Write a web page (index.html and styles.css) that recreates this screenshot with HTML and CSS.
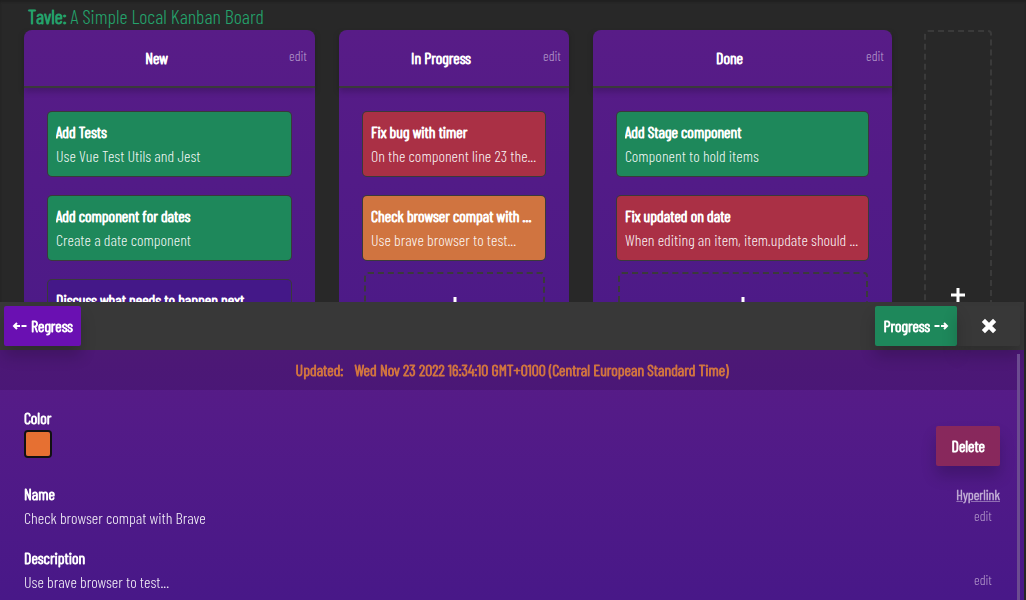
FILE: index.html
```html
<!DOCTYPE html>
<html lang="en">
<head>
<meta charset="utf-8">
<title>Tavle</title>
<link rel="stylesheet" href="styles.css">
</head>
<body>
<main class="board">
  <h1 class="brand"><strong>Tavle:</strong> A Simple Local Kanban Board</h1>
  <div class="stages">
    <section class="stage">
      <header class="stage-head"><h2 class="stage-name">New</h2><button class="edit">edit</button></header>
      <div class="stage-items">
        <article class="card green"><h3 class="card-name">Add Tests</h3><p class="card-text">Use Vue Test Utils and Jest</p></article>
        <article class="card green"><h3 class="card-name">Add component for dates</h3><p class="card-text">Create a date component</p></article>
        <article class="card indigo"><h3 class="card-name">Discuss what needs to happen next</h3></article>
      </div>
    </section>
    <section class="stage">
      <header class="stage-head"><h2 class="stage-name">In Progress</h2><button class="edit">edit</button></header>
      <div class="stage-items">
        <article class="card red"><h3 class="card-name">Fix bug with timer</h3><p class="card-text">On the component line 23 the...</p></article>
        <article class="card orange"><h3 class="card-name">Check browser compat with ...</h3><p class="card-text">Use brave browser to test...</p></article>
        <button class="add-item" aria-label="Add item"><svg class="plus" viewBox="0 0 16 16"><path d="M8 1v14M1 8h14"/></svg></button>
      </div>
    </section>
    <section class="stage">
      <header class="stage-head"><h2 class="stage-name">Done</h2><button class="edit">edit</button></header>
      <div class="stage-items">
        <article class="card green"><h3 class="card-name">Add Stage component</h3><p class="card-text">Component to hold items</p></article>
        <article class="card red"><h3 class="card-name">Fix updated on date</h3><p class="card-text">When editing an item, item.update should ...</p></article>
        <button class="add-item" aria-label="Add item"><svg class="plus" viewBox="0 0 16 16"><path d="M8 1v14M1 8h14"/></svg></button>
      </div>
    </section>
    <button class="add-stage" aria-label="Add stage"><svg class="plus" viewBox="0 0 16 16"><path d="M8 1v14M1 8h14"/></svg></button>
  </div>
</main>
<aside class="drawer">
  <div class="toolbar">
    <button class="btn regress"><svg class="arrow" viewBox="0 0 15 10"><path d="M5 2L2 5L5 8M2 5H8M9.500 5H14.500"/></svg>Regress</button>
    <button class="btn progress">Progress<svg class="arrow" viewBox="0 0 15 10"><path d="M10 2L13 5L10 8M13 5H7M5.500 5H.5"/></svg></button>
    <button class="btn close" aria-label="Close"><svg class="cross" viewBox="0 0 16 16"><path d="M3 3L13 13M13 3L3 13"/></svg></button>
  </div>
  <div class="details">
    <p class="updated"><span>Updated:</span><time>Wed Nov 23 2022 16:34:10 GMT+0100 (Central European Standard Time)</time></p>
    <div class="fields">
      <div class="row">
        <div class="field color-field"><label class="label" for="color">Color</label><input class="swatch" id="color" type="color" value="#e67032"></div>
        <button class="btn delete">Delete</button>
      </div>
      <div class="row">
        <div class="field"><h4 class="label">Name</h4><p class="value">Check browser compat with Brave</p></div>
        <div class="actions"><a class="link" href="#item">Hyperlink</a><button class="edit">edit</button></div>
      </div>
      <div class="row">
        <div class="field"><h4 class="label">Description</h4><p class="value">Use brave browser to test...</p></div>
        <div class="actions"><button class="edit">edit</button></div>
      </div>
    </div>
  </div>
  <div class="scrollbar"></div>
</aside>
</body>
</html>
```
FILE: styles.css
```css
* { box-sizing: border-box; margin: 0; }
html, body { height: 100%; }
body {
  overflow: hidden;
  background: #282828;
  color: #fff;
  font: 300 16px/24px "Barlow Condensed", "Liberation Sans Narrow", "Liberation Sans", sans-serif;
}
button, input { font: inherit; color: inherit; border: 0; padding: 0; background: none; }
h2, h3, h4 { font-size: 16px; font-weight: 300; }
svg { fill: none; stroke: currentColor; display: block; }

.brand strong, .stage-name, .card-name, .btn, .updated, .label { font-weight: 300; -webkit-text-stroke: 1px currentColor; }

.board { height: 100%; padding: 4px 34px 0 24px; display: flex; flex-direction: column; box-shadow: inset 0 2px 2px #202020; }
.brand { padding: 0 0 2px 4px; font-size: 20px; line-height: 24px; font-weight: 300; color: #24a36c; }
.stages { flex: 1; display: grid; grid-template-columns: 291fr 230fr 299fr 76px; gap: 24px; }
.stage { min-width: 0; border-radius: 8px 8px 0 0; background: linear-gradient(#581c87, #4c1a87 300px, #441888); }
.stage-head { display: grid; grid-template-columns: 1fr auto; align-items: center; height: 58px; padding-right: 8px; border-bottom: 2px solid #3a3a3a; box-shadow: 0 4px 6px #0000002e; }
.stage-name { text-align: center; }
.edit { font-size: 14px; line-height: 20px; color: #b49acb; cursor: pointer; }
.stage-head .edit { padding-bottom: 4px; }
.stage-items { display: grid; gap: 20px; padding: 24px; }
.card { min-width: 0; height: 64px; padding: 8px; border-radius: 4px; box-shadow: 0 0 0 1px #3a3a3a; }
.card-name, .card-text { overflow: hidden; white-space: nowrap; text-overflow: ellipsis; }
.card-text { color: #ffffffee; }
.green { background: #1e885b; }
.red { background: #aa3045; }
.orange { background: #d07440; }
.indigo { background: #441888; }
.plus { width: 16px; height: 16px; stroke-width: 3; }
.add-item { display: grid; place-items: center; height: 64px; margin: -8px 0 0 1px; border: 2px dashed #3a3a3a; border-radius: 4px; }
.add-stage { display: grid; place-items: center; margin-left: 8px; margin-bottom: 40px; border: 2px dashed #3a3a3a; border-radius: 4px; }

.drawer { position: fixed; left: 0; right: 2px; bottom: 0; height: calc(50vh - 2px); display: flex; flex-direction: column; background: linear-gradient(#581c87, #581c87 48px, #481888); }
.toolbar { display: flex; padding: 4px; background: #383838; }
.btn { height: 40px; padding: 0 8px; border-radius: 2px; box-shadow: 0 10px 15px #00000030; display: flex; align-items: center; justify-content: center; gap: 4px; }
.regress { margin-right: auto; background: #6a10b2; }
.progress { background: #1e885b; }
.close { width: 63px; }
.arrow { width: 15px; height: 10px; stroke-width: 2; }
.cross { width: 18px; height: 18px; stroke-width: 4; }
.details { flex: 1; }
.updated { display: flex; justify-content: center; gap: 11px; padding: 8px; background: #00000020; color: #d07440; }
.fields { display: grid; gap: 16px; padding: 16px 24px; }
.row { display: flex; justify-content: space-between; align-items: flex-end; }
.field { display: grid; }
.color-field { padding-bottom: 8px; }
.swatch { width: 28px; height: 28px; border: 2px solid #111; border-radius: 4px; appearance: none; overflow: hidden; }
.swatch::-webkit-color-swatch-wrapper { padding: 0; }
.swatch::-webkit-color-swatch { border: 0; }
.value { color: #ffffffee; }
.delete { padding: 0 15px; background: #88285c; }
.actions { display: flex; flex-direction: column; align-items: flex-end; }
.actions .edit { padding: 0 8px 4px 0; }
.link { color: #d2c2e0; font-size: 14px; line-height: 22px; -webkit-text-stroke: 1px #d2c2e080; }
.scrollbar { position: absolute; right: 4px; top: 52px; bottom: 0; width: 3px; background: #6c4c90; }
```
